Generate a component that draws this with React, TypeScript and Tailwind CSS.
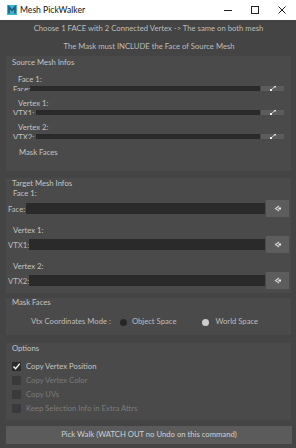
import React from "react";

const font = { fontFamily: 'Lato, "Open Sans", Arial, sans-serif' };

function SmallIcon() {
  return (
    <svg width="6" height="5" viewBox="0 0 6 5">
      <rect x="0" y="3" width="2" height="2" fill="#f0f0f0" />
      <path d="M2 3 L5 0.5" stroke="#bdbdbd" strokeWidth="1" />
      <rect x="4" y="0" width="2" height="1.5" fill="#d8d8d8" />
    </svg>
  );
}

function PickIcon() {
  return (
    <svg width="8" height="7" viewBox="0 0 8 7">
      <path d="M5 1 L1.5 3.5 L5 6" stroke="#cfcfcf" strokeWidth="1.2" fill="none" />
      <rect x="4.5" y="2.5" width="2.5" height="2" fill="#f2f2f2" />
    </svg>
  );
}

function ThinRow({ label, barLeft }: { label: string; barLeft: string }) {
  return (
    <div className="flex h-[5px] items-stretch overflow-hidden">
      <div className={`${barLeft} shrink-0 overflow-hidden pl-[7px]`}>
        <div className="mt-[-1px] whitespace-nowrap text-[7.7px] leading-[9px] text-[#c4c4c4]">{label}</div>
      </div>
      <div className="flex-1 bg-[#2a2a2a]" />
      <div className="ml-[1px] flex w-[23px] items-center justify-center bg-[#5c5c5c]">
        <SmallIcon />
      </div>
      <div className="w-[7px]" />
    </div>
  );
}

function FieldRow({ label, w }: { label: string; w: string }) {
  return (
    <div className="flex h-[17px] items-center pl-[2px] pr-[2px]">
      <div className={`${w} shrink-0 whitespace-nowrap text-[7.7px] leading-[10px] text-[#bdbdbd]`}>{label}</div>
      <div className="h-[11px] flex-1 bg-[#2a2a2a]" />
      <div className="ml-[1px] flex h-[17px] w-[23px] items-center justify-center bg-[#5d5d5d]">
        <PickIcon />
      </div>
    </div>
  );
}

function Check({ checked, label, disabled }: { checked?: boolean; label: string; disabled?: boolean }) {
  return (
    <div className="flex h-[14px] items-center pl-[6px]">
      <div
        className={`flex h-[9px] w-[9px] items-center justify-center ${
          disabled ? "bg-[#3a3a3a]" : "bg-[#2b2b2b]"
        }`}
      >
        {checked && (
          <svg width="9" height="9" viewBox="0 0 9 9">
            <path d="M1.5 4.5 L3.6 6.8 L7.8 1.6" stroke="#f2f2f2" strokeWidth="1.4" fill="none" />
          </svg>
        )}
      </div>
      <div
        className={`ml-[5px] whitespace-nowrap text-[7.7px] leading-[10px] ${
          disabled ? "text-[#7b7b7b]" : "text-[#c4c4c4]"
        }`}
      >
        {label}
      </div>
    </div>
  );
}

const lbl = "flex items-center whitespace-nowrap text-[7.7px] text-[#c4c4c4]";

export default function App() {
  return (
    <div className="flex h-[448px] w-[296px] flex-col overflow-hidden bg-[#444444]" style={font}>
      {/* title bar */}
      <div className="flex h-[20px] shrink-0 items-center bg-white">
        <svg className="ml-[7px]" width="10" height="10" viewBox="0 0 10 10">
          <rect width="10" height="10" fill="#3fb3cf" />
          <path d="M2 8.5 V2 L5 5.5 L8 2 V8.5" stroke="#1d5a78" strokeWidth="1.6" fill="none" />
        </svg>
        <div className="ml-[3px] whitespace-nowrap text-[8.6px] leading-[12px] text-[#111]">Mesh PickWalker</div>
        <div className="flex-1" />
        <svg width="10" height="10" viewBox="0 0 10 10" className="mr-[17px]">
          <path d="M1 5.5 H9" stroke="#222" strokeWidth="1" />
        </svg>
        <svg width="10" height="10" viewBox="0 0 10 10" className="mr-[17px]">
          <rect x="1.5" y="1.5" width="7" height="7" stroke="#222" strokeWidth="1" fill="none" />
        </svg>
        <svg width="10" height="10" viewBox="0 0 10 10" className="mr-[9px]">
          <path d="M1.5 1.5 L8.5 8.5 M8.5 1.5 L1.5 8.5" stroke="#222" strokeWidth="1" />
        </svg>
      </div>

      {/* instructions */}
      <div className="flex h-[36px] shrink-0 flex-col items-center whitespace-nowrap text-[7.7px] leading-[10px] text-[#bdbdbd]">
        <div className="mt-[3px] flex h-[10px] items-center pl-[1px]">
          Choose 1 FACE with 2 Connected Vertex -&gt; The same on both mesh
        </div>
        <div className="mt-[8px] flex h-[10px] items-center pl-[2px]">
          The Mask must INCLUDE the Face of Source Mesh
        </div>
      </div>

      {/* Source mesh panel */}
      <div className="ml-[6px] mr-[5px] flex h-[115px] shrink-0 flex-col bg-[#4a4a4a]">
        <div className={`${lbl} h-[14px] pl-[6px]`}>Source Mesh Infos</div>
        <div className={`${lbl} mt-[4px] h-[12px] pl-[12px]`}>Face 1:</div>
        <ThinRow label="Face:" barLeft="w-[24px]" />
        <div className={`${lbl} mt-[7px] h-[12px] pl-[12px]`}>Vertex 1:</div>
        <ThinRow label="VTX1:" barLeft="w-[30px]" />
        <div className={`${lbl} mt-[7px] h-[12px] pl-[12px]`}>Vertex 2:</div>
        <ThinRow label="VTX2:" barLeft="w-[30px]" />
        <div className={`${lbl} mt-[7px] h-[14px] pl-[13px]`}>Mask Faces</div>
      </div>

      {/* Target mesh panel */}
      <div className="ml-[6px] mr-[5px] mt-[7px] flex h-[115px] shrink-0 flex-col bg-[#4a4a4a]">
        <div className={`${lbl} h-[11px] pl-[6px]`}>Target Mesh Infos</div>
        <div className={`${lbl} h-[10px] pl-[7px]`}>Face 1:</div>
        <div className="mt-[1px]">
          <FieldRow label="Face:" w="w-[18px]" />
        </div>
        <div className={`${lbl} mt-[9px] h-[10px] pl-[7px]`}>Vertex 1:</div>
        <FieldRow label="VTX1:" w="w-[21px]" />
        <div className={`${lbl} mt-[9px] h-[10px] pl-[7px]`}>Vertex 2:</div>
        <FieldRow label="VTX2:" w="w-[21px]" />
      </div>

      {/* Mask faces panel */}
      <div className="ml-[6px] mr-[5px] mt-[5px] flex h-[37px] shrink-0 flex-col bg-[#4a4a4a]">
        <div className={`${lbl} h-[10px] pl-[6px]`}>Mask Faces</div>
        <div className="mt-[7px] flex h-[14px] items-center whitespace-nowrap text-[7.7px] text-[#bdbdbd]">
          <div className="ml-[25px]">Vtx Coordinates Mode :</div>
          <div className="ml-[9px] h-[7px] w-[7px] rounded-full bg-[#262626]" />
          <div className="ml-[5px]">Object Space</div>
          <div className="ml-[26px] h-[7px] w-[7px] rounded-full bg-[#cdcdcd]" />
          <div className="ml-[6px]">World Space</div>
        </div>
      </div>

      {/* Options panel */}
      <div className="ml-[6px] mr-[5px] mt-[8px] flex h-[77px] shrink-0 flex-col bg-[#4a4a4a]">
        <div className={`${lbl} h-[12px] pl-[6px]`}>Options</div>
        <div className="mt-[4px] flex flex-col">
          <Check checked label="Copy Vertex Position" />
          <Check disabled label="Copy Vertex Color" />
          <Check disabled label="Copy UVs" />
          <Check disabled label="Keep Selection Info in Extra Attrs" />
        </div>
      </div>

      {/* Pick walk button */}
      <div className="ml-[6px] mr-[4px] mt-[6px] flex h-[18px] shrink-0 items-center justify-center whitespace-nowrap bg-[#5b5b5b] text-[7.7px] text-[#d0d0d0]">
        Pick Walk (WATCH OUT no Undo on this command)
      </div>
    </div>
  );
}
